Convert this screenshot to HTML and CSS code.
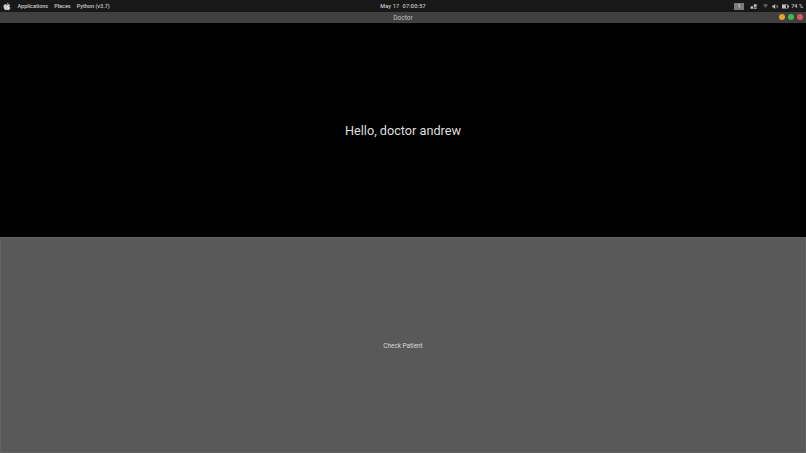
FILE: index.html
```html
<!DOCTYPE html>
<html lang="en">
<head>
<meta charset="utf-8">
<title>Doctor</title>
<link rel="stylesheet" href="styles.css">
</head>
<body>
<div class="screen">
  <header class="topbar">
    <div class="tb-left">
      <svg class="apple" viewBox="0 0 16 18" aria-hidden="true"><path d="M11 1C11.1 2.600 9.600 4.300 8 4.200 7.900 2.700 9.500 1.100 11 1ZM8.100 5.300C9 5.300 10 4.500 11.300 4.500 12.500 4.500 13.600 5.100 14.300 6.100 12.100 7.400 12.500 10.600 14.900 11.500 14.200 13.500 12.700 16.400 11.100 16.400 10.100 16.400 9.600 15.700 8.300 15.700 7 15.700 6.500 16.400 5.500 16.400 3.500 16.400 1 12.300 1 9.100 1 6.200 2.900 4.600 4.700 4.600 5.900 4.600 7.200 5.300 8.100 5.300Z"/></svg>
      <span class="menu">Applications</span>
      <span class="menu">Places</span>
      <span class="menu">Python (v3.7)</span>
    </div>
    <div class="clock">May 17&nbsp;&nbsp;07:00:57</div>
    <div class="tb-right">
      <span class="ws">1</span>
      <svg class="ico i-net" viewBox="0 0 11 7" aria-hidden="true"><path d="M6 0h4.500v4H6zM1 3h4v4H1zM6 5h4.500v2H6z"/></svg>
      <svg class="ico i-wifi" viewBox="0 0 8 6" aria-hidden="true"><path d="M0 .8C2.500-.3 5.500-.3 8 .8L4 6z"/></svg>
      <svg class="ico i-vol" viewBox="0 0 9 7" aria-hidden="true"><path d="M0 2h1.800L4 0v7L1.800 5H0z"/><path class="wave" d="M5.300 2c.6.800.6 2.200 0 3M6.800 1c1.100 1.500 1.100 3.500 0 5"/></svg>
      <svg class="ico i-bat" viewBox="0 0 10 6" aria-hidden="true"><path d="M0 0h8.500v1.500H10v3H8.500V6H0zM5.500 1v4h2V1z"/></svg>
      <span class="pct">74 %</span>
    </div>
  </header>
  <div class="titlebar">
    <span class="title">Doctor</span>
    <div class="controls">
      <span class="dot dot-min"></span>
      <span class="dot dot-max"></span>
      <span class="dot dot-close"></span>
    </div>
  </div>
  <main class="app">
    <section class="greeting">Hello, doctor andrew</section>
    <button class="action" type="button">Check Patient</button>
  </main>
</div>
</body>
</html>
```
FILE: styles.css
```css
* { box-sizing: border-box; }
html, body { margin: 0; padding: 0; background: #000; }
.screen {
  width: 806px;
  height: 453px;
  display: flex;
  flex-direction: column;
  overflow: hidden;
  font-family: Roboto, "Liberation Sans", sans-serif;
}
.topbar {
  height: 12px;
  flex: none;
  display: grid;
  grid-template-columns: 1fr auto 1fr;
  align-items: center;
  background: #181818;
  color: #c8c8c8;
  font-size: 5.500px;
  font-weight: 500;
}
.tb-left { display: flex; align-items: center; padding-left: 3px; }
.apple { width: 8px; height: 9px; fill: #d0d0d0; margin-right: 6.500px; }
.menu { margin-right: 6px; }
.clock { letter-spacing: .2px; }
.tb-right { display: flex; align-items: center; justify-content: flex-end; padding-right: 3px; }
.ws {
  width: 10px;
  height: 7px;
  background: #7a7a7a;
  color: #e8e8e8;
  font-size: 4.500px;
  line-height: 7px;
  text-align: center;
  margin-right: 6px;
}
.ico { fill: #c0c0c0; display: block; }
.i-net { width: 7px; height: 5px; margin-right: 5.500px; }
.i-wifi { width: 5px; height: 4px; fill: #5e5e5e; margin-right: 4px; }
.i-vol { width: 7px; height: 5px; margin-right: 3.500px; }
.wave { fill: none; stroke: #c0c0c0; stroke-width: .8; }
.i-bat { width: 7px; height: 5px; margin-right: 2px; }
.pct { letter-spacing: .05px; }
.titlebar {
  height: 11px;
  flex: none;
  position: relative;
  display: flex;
  align-items: center;
  justify-content: center;
  background: #404040;
  color: #c2c2c2;
  font-size: 6.500px;
}
.controls {
  position: absolute;
  right: 3px;
  top: 2px;
  display: flex;
  gap: 3px;
}
.dot { width: 6px; height: 6px; border-radius: 50%; }
.dot-min { background: #e5a526; }
.dot-max { background: #3fb950; }
.dot-close { background: #e0555a; }
.app { flex: 1; display: flex; flex-direction: column; background: #000; }
.greeting {
  height: 214px;
  flex: none;
  display: flex;
  align-items: center;
  justify-content: center;
  color: #dedede;
  font-size: 12.700px;
}
.action {
  flex: 1;
  margin: 0;
  padding: 2px 0 0;
  border: 1px solid #636363;
  border-radius: 0;
  background: #595959;
  color: #d8d8d8;
  font-family: inherit;
  font-size: 6.400px;
}
```
